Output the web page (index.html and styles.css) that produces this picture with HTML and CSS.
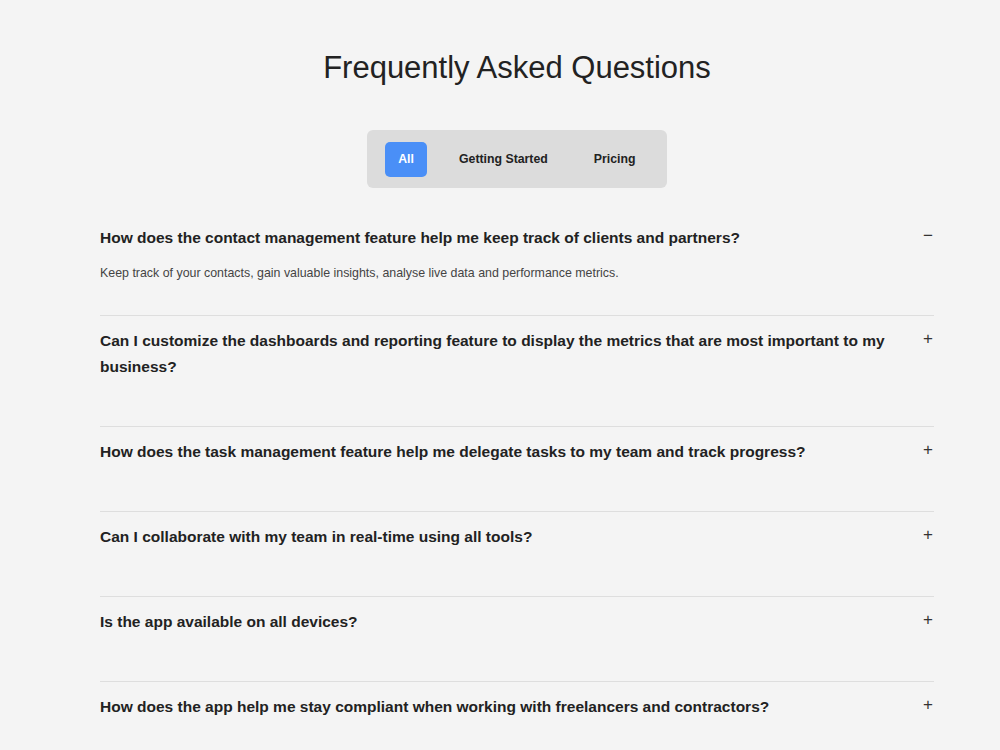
FILE: index.html
```html
<!DOCTYPE html>
<html lang="en">
<head>
  <meta charset="UTF-8" />
  <meta name="viewport" content="width=device-width, initial-scale=1" />
  <title>FAQ</title>
  <link rel="stylesheet" href="styles.css">
</head>
<body>
  <div class="container">
    <h1>Frequently Asked Questions</h1>

    <div class="tabs">
      <button class="tab active">All</button>
      <button class="tab">Getting Started</button>
      <button class="tab">Pricing</button>
    </div>

    <div class="faq">
      <div class="item open">
        <div class="question">
          <span>How does the contact management feature help me keep track of clients and partners?</span>
          <span class="icon">&minus;</span>
        </div>
        <p class="answer">Keep track of your contacts, gain valuable insights, analyse live data and performance metrics.</p>
      </div>

      <div class="item">
        <div class="question">
          <span>Can I customize the dashboards and reporting feature to display the metrics that are most important to my business?</span>
          <span class="icon">+</span>
        </div>
      </div>

      <div class="item">
        <div class="question">
          <span>How does the task management feature help me delegate tasks to my team and track progress?</span>
          <span class="icon">+</span>
        </div>
      </div>

      <div class="item">
        <div class="question">
          <span>Can I collaborate with my team in real-time using all tools?</span>
          <span class="icon">+</span>
        </div>
      </div>

      <div class="item">
        <div class="question">
          <span>Is the app available on all devices?</span>
          <span class="icon">+</span>
        </div>
      </div>

      <div class="item">
        <div class="question">
          <span>How does the app help me stay compliant when working with freelancers and contractors?</span>
          <span class="icon">+</span>
        </div>
      </div>
    </div>
  </div>
</body>
</html>
```

FILE: styles.css
```css
body {
  font-family: "Liberation Sans", Arial, sans-serif;
  background: #f4f4f4;
  color: #222;
  margin: 0;
  padding: 0;
}

.container {
  width: 834px;
  margin-left: 100px;
  padding-top: 49px;
}

h1 {
  text-align: center;
  font-size: 31px;
  font-weight: normal;
  line-height: 38px;
  margin: 0;
  color: #222;
}

.tabs {
  display: flex;
  align-items: center;
  width: 300px;
  height: 58px;
  box-sizing: border-box;
  margin: 43px auto 0;
  padding: 0 0 0 18px;
  background: #dcdcdc;
  border-radius: 6px;
}

.tab {
  flex-shrink: 0;
  white-space: nowrap;
  font-family: "Liberation Sans", Arial, sans-serif;
  font-size: 12.3px;
  font-weight: bold;
  color: #222;
  background: none;
  border: none;
  border-radius: 5px;
  height: 35px;
  padding: 0 16px;
  cursor: pointer;
}

.tab.active {
  background: #4a8ff7;
  color: #fff;
  width: 42px;
  padding: 0;
  margin-right: 16px;
}

.tab:last-child {
  margin-left: 14px;
}

.faq {
  margin-top: 25px;
}

.item {
  border-bottom: 1px solid #dedede;
  padding: 12px 0 46px;
}

.item:last-child {
  border-bottom: none;
}

.item.open {
  padding-bottom: 33px;
}

.question {
  display: flex;
  justify-content: space-between;
  align-items: flex-start;
  gap: 30px;
  font-size: 15.5px;
  font-weight: bold;
  line-height: 26px;
}

.icon {
  width: 10px;
  font-weight: normal;
  font-size: 17px;
  line-height: 22px;
  color: #333;
  margin-right: 1px;
  flex-shrink: 0;
  text-align: center;
}

.answer {
  margin: 13px 0 0;
  font-size: 12.4px;
  line-height: 18px;
  color: #444;
}
```
